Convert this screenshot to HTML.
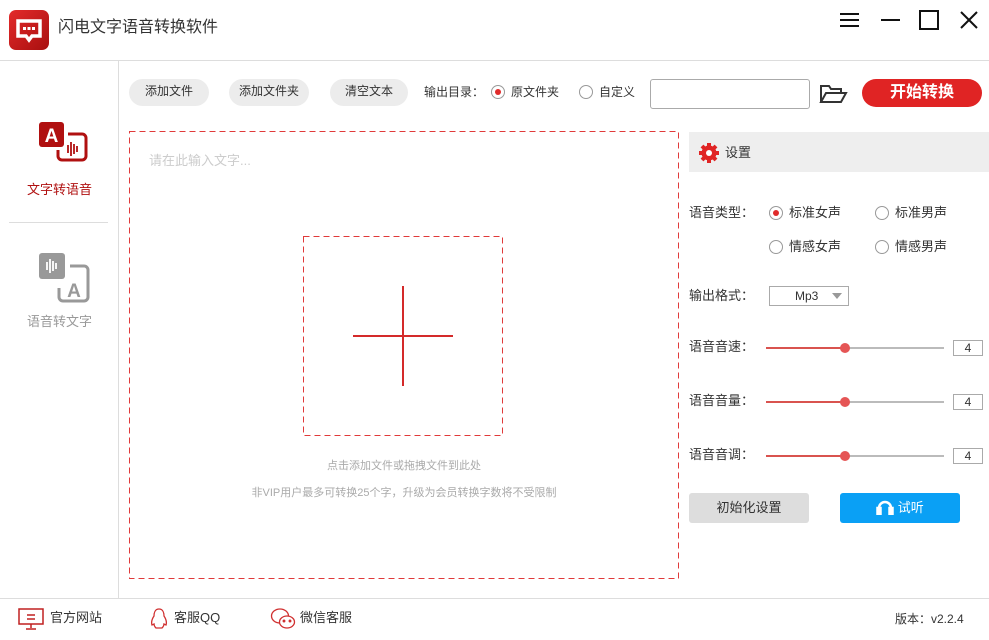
<!DOCTYPE html>
<html><head><meta charset="utf-8"><style>
*{margin:0;padding:0;box-sizing:border-box}
body{width:989px;height:640px;position:relative;background:#fff;font-family:"Liberation Sans","Noto Sans CJK SC",sans-serif;font-size:13px;color:#333;overflow:hidden}
.a{position:absolute}
.btn{position:absolute;top:79px;height:27px;border-radius:14px;background:#ececec;font-size:12px;line-height:25px;text-align:center;color:#333}
.radio{position:absolute;width:14px;height:14px;border-radius:50%;border:1px solid #999;background:#fff}
.radio.on::after{content:"";position:absolute;left:3px;top:3px;width:6px;height:6px;border-radius:50%;background:#e02b2b}
.lbl{position:absolute;font-size:13px;color:#333;line-height:16px}
.track{position:absolute;left:766px;width:178px;height:2px;background:#bbb}
.track i{position:absolute;left:0;top:0;width:80px;height:2px;background:#d9534f}
.track b{position:absolute;left:74px;top:-4px;width:10px;height:10px;border-radius:50%;background:#e55555}
.num{position:absolute;left:953px;width:30px;height:16px;border:1px solid #aaa;font-size:12px;text-align:center;line-height:14px}
</style></head><body>
<div class="a" style="left:9px;top:10px;width:40px;height:40px;border-radius:7px;background:linear-gradient(135deg,#e32a2a,#a80f0f)"></div>
<svg class="a" style="left:9px;top:10px" width="40" height="40"><path d="M9 11h22v15h-8l-3 4-3-4h-8z" fill="none" stroke="#fff" stroke-width="3.5"/><rect x="14" y="17" width="3" height="3" fill="#fff"/><rect x="18.5" y="17" width="3" height="3" fill="#fff"/><rect x="23" y="17" width="3" height="3" fill="#fff"/></svg>
<div class="a" style="left:58px;top:18px;font-size:16px;line-height:20px;color:#333">闪电文字语音转换软件</div>
<svg class="a" style="left:838px;top:10px" width="145" height="22" stroke="#111" stroke-width="2" fill="none"><path d="M2 4h19M2 10h19M2 16h19"/><path d="M43 10h19"/><rect x="82" y="1" width="18" height="18"/><path d="M123 2l16 16M139 2l-16 16"/></svg>
<div class="a" style="left:0;top:60px;width:989px;height:1px;background:#ddd"></div>
<div class="a" style="left:118px;top:61px;width:1px;height:537px;background:#ddd"></div>
<svg class="a" style="left:38px;top:122px" width="50" height="50"><rect x="1" y="0" width="25" height="25" rx="3" fill="#b01010"/><text x="13.5" y="20" font-family="Liberation Sans" font-weight="bold" font-size="19" fill="#fff" text-anchor="middle">A</text><path d="M30 12h14a4 4 0 0 1 4 4v18a4 4 0 0 1-4 4H24a4 4 0 0 1-4-4v-6" fill="none" stroke="#b01010" stroke-width="3"/><path d="M30 23v8M33 20v14M36 22v10M39 24v6" stroke="#b01010" stroke-width="1.8"/></svg>
<div class="a" style="left:27px;top:179px;font-size:13px;color:#b01010">文字转语音</div>
<div class="a" style="left:9px;top:222px;width:99px;height:1px;background:#ddd"></div>
<svg class="a" style="left:38px;top:253px" width="52" height="50"><rect x="1" y="0" width="26" height="26" rx="3" fill="#999"/><path d="M9 9v8M12 6v14M15 8v10M18 10v6" stroke="#fff" stroke-width="1.8"/><path d="M32 13h14a4 4 0 0 1 4 4v27a4 4 0 0 1-4 4H25a4 4 0 0 1-4-4v-9" fill="none" stroke="#999" stroke-width="3"/><text x="36" y="44" font-family="Liberation Sans" font-weight="bold" font-size="19" fill="#999" text-anchor="middle">A</text></svg>
<div class="a" style="left:27px;top:311px;font-size:13px;color:#999">语音转文字</div>
<div class="btn" style="left:129px;width:80px">添加文件</div>
<div class="btn" style="left:229px;width:80px">添加文件夹</div>
<div class="btn" style="left:330px;width:78px">清空文本</div>
<div class="lbl" style="left:424px;top:84px;font-size:12px">输出目录：</div>
<div class="radio on" style="left:491px;top:85px"></div>
<div class="lbl" style="left:511px;top:84px;font-size:12px">原文件夹</div>
<div class="radio" style="left:579px;top:85px"></div>
<div class="lbl" style="left:599px;top:84px;font-size:12px">自定义</div>
<div class="a" style="left:650px;top:79px;width:160px;height:30px;border:1px solid #aaa;border-radius:3px"></div>
<svg class="a" style="left:819px;top:84px" width="29" height="20" fill="none" stroke="#333" stroke-width="2"><path d="M2 18V2h8l2 3h10v4M2 18l5-9h20l-5 9z"/></svg>
<div class="a" style="left:862px;top:79px;width:120px;height:28px;border-radius:14px;background:#e02424;color:#fff;font-size:16px;font-weight:bold;text-align:center;line-height:28px">开始转换</div>
<svg class="a" style="left:0;top:0" width="989" height="640" fill="none" stroke="#e03a3a" stroke-width="1" stroke-dasharray="6,4"><rect x="129.5" y="131.5" width="549" height="447"/><rect x="303.5" y="236.5" width="199" height="199"/></svg>
<div class="a" style="left:149px;top:150px;font-size:13px;color:#ccc">请在此输入文字...</div>
<div class="a" style="left:353px;top:335px;width:100px;height:2px;background:#d42a2a"></div>
<div class="a" style="left:402px;top:286px;width:2px;height:100px;background:#d42a2a"></div>
<div class="a" style="left:129px;width:550px;top:457px;text-align:center;font-size:11px;color:#aaa">点击添加文件或拖拽文件到此处</div>
<div class="a" style="left:129px;width:550px;top:484px;text-align:center;font-size:11px;color:#aaa">非VIP用户最多可转换25个字，升级为会员转换字数将不受限制</div>
<div class="a" style="left:689px;top:132px;width:300px;height:40px;background:#eee"></div>
<svg class="a" style="left:698px;top:142px" width="22" height="22"><circle cx="11" cy="11" r="7.5" fill="#e02424"/><g stroke="#e02424" stroke-width="4"><path d="M11 1v20M1 11h20M4 4l14 14M18 4L4 18"/></g><circle cx="11" cy="11" r="3" fill="#fff"/></svg>
<div class="lbl" style="left:725px;top:145px">设置</div>
<div class="lbl" style="left:689px;top:205px">语音类型：</div>
<div class="radio on" style="left:769px;top:206px"></div><div class="lbl" style="left:789px;top:205px">标准女声</div>
<div class="radio" style="left:875px;top:206px"></div><div class="lbl" style="left:895px;top:205px">标准男声</div>
<div class="radio" style="left:769px;top:240px"></div><div class="lbl" style="left:789px;top:239px">情感女声</div>
<div class="radio" style="left:875px;top:240px"></div><div class="lbl" style="left:895px;top:239px">情感男声</div>
<div class="lbl" style="left:689px;top:288px">输出格式：</div>
<div class="a" style="left:769px;top:286px;width:80px;height:20px;border:1px solid #aaa;font-size:12px;line-height:18px;padding-left:25px">Mp3</div>
<div class="a" style="left:832px;top:293px;border-left:5px solid transparent;border-right:5px solid transparent;border-top:6px solid #999"></div>
<div class="lbl" style="left:689px;top:339px">语音音速：</div><div class="track" style="top:347px"><i></i><b></b></div><div class="num" style="top:340px">4</div>
<div class="lbl" style="left:689px;top:393px">语音音量：</div><div class="track" style="top:401px"><i></i><b></b></div><div class="num" style="top:394px">4</div>
<div class="lbl" style="left:689px;top:447px">语音音调：</div><div class="track" style="top:455px"><i></i><b></b></div><div class="num" style="top:448px">4</div>
<div class="a" style="left:689px;top:493px;width:120px;height:30px;border-radius:3px;background:#ddd;text-align:center;line-height:30px;font-size:13px">初始化设置</div>
<div class="a" style="left:840px;top:493px;width:120px;height:30px;border-radius:3px;background:#0aa0f5;color:#fff;text-align:center;line-height:30px;font-size:13px"><svg width="18" height="16" style="vertical-align:-3px" fill="none" stroke="#fff" stroke-width="2.5"><path d="M3 14V9a6 6 0 0 1 12 0v5"/><rect x="1.5" y="9" width="3" height="6" fill="#fff"/><rect x="13.5" y="9" width="3" height="6" fill="#fff"/></svg> 试听</div>
<div class="a" style="left:0;top:598px;width:989px;height:1px;background:#ddd"></div>
<svg class="a" style="left:18px;top:608px" width="26" height="22" fill="none" stroke="#c02020" stroke-width="1.5"><rect x="1" y="1" width="24" height="15"/><path d="M9 7h8M9 11h8M13 16v4M8 21h10"/></svg>
<div class="lbl" style="left:50px;top:610px">官方网站</div>
<svg class="a" style="left:150px;top:607px" width="18" height="24" fill="none" stroke="#d03030" stroke-width="1.3"><path d="M9 2c4 0 5 4 5 7 2 3 3 6 2 9l-2-1c0 2-1 3-2 4h-6c-1-1-2-2-2-4l-2 1c-1-3 0-6 2-9 0-3 1-7 5-7z"/></svg>
<div class="lbl" style="left:174px;top:610px">客服QQ</div>
<svg class="a" style="left:270px;top:607px" width="26" height="24" fill="none" stroke="#d03030" stroke-width="1.3"><ellipse cx="10" cy="9" rx="8.5" ry="7"/><ellipse cx="17" cy="15" rx="7.5" ry="6" fill="#fff"/><circle cx="14" cy="14" r=".8" fill="#d03030"/><circle cx="20" cy="14" r=".8" fill="#d03030"/></svg>
<div class="lbl" style="left:300px;top:610px">微信客服</div>
<div class="lbl" style="left:895px;top:611px;font-size:12px">版本：v2.2.4</div>
</body></html>
